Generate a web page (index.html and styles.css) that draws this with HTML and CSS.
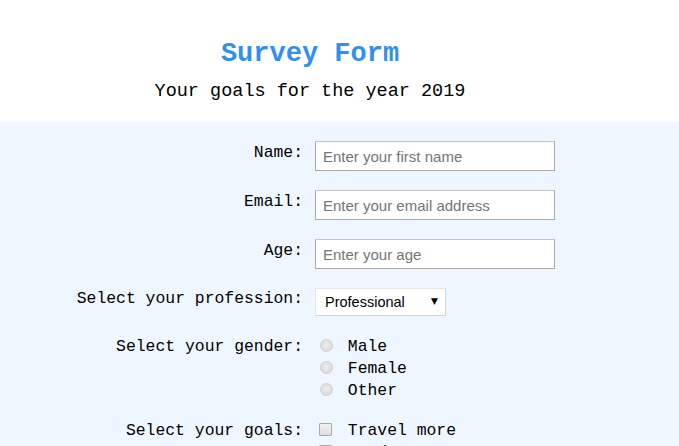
FILE: index.html
```html
<!DOCTYPE html>
<html lang="en">
<head>
<meta charset="utf-8">
<title>Survey Form</title>
<link rel="stylesheet" href="styles.css">
</head>
<body>
<header class="header">
  <h1 class="title">Survey Form</h1>
  <p class="subtitle">Your goals for the year 2019</p>
</header>
<main class="panel">
  <form class="form">
    <div class="row">
      <label class="label label-input" for="name">Name:</label>
      <input class="field" id="name" type="text" placeholder="Enter your first name">
    </div>
    <div class="row">
      <label class="label label-input" for="email">Email:</label>
      <input class="field" id="email" type="email" placeholder="Enter your email address">
    </div>
    <div class="row">
      <label class="label label-input" for="age">Age:</label>
      <input class="field" id="age" type="number" placeholder="Enter your age">
    </div>
    <div class="row row-select">
      <label class="label label-select" for="prof">Select your profession:</label>
      <span class="select-wrap">
        <select class="select" id="prof">
          <option>Professional</option>
          <option>Student</option>
          <option>Other</option>
        </select>
      </span>
    </div>
    <div class="row row-radio">
      <span class="label">Select your gender:</span>
      <div class="options">
        <label class="option"><input class="radio" type="radio" name="gender"> Male</label>
        <label class="option"><input class="radio" type="radio" name="gender"> Female</label>
        <label class="option"><input class="radio" type="radio" name="gender"> Other</label>
      </div>
    </div>
    <div class="row row-check">
      <span class="label">Select your goals:</span>
      <div class="options">
        <label class="option"><input class="check" type="checkbox"> Travel more</label>
        <label class="option"><input class="check" type="checkbox"> Read more</label>
        <label class="option"><input class="check" type="checkbox"> Exercise</label>
      </div>
    </div>
  </form>
</main>
</body>
</html>
```
FILE: styles.css
```css
html, body {
  margin: 0;
  padding: 0;
}
body {
  font-family: "Liberation Mono", "DejaVu Sans Mono", monospace;
  color: #000;
  background: #eef7ff;
}
.header {
  background: #fff;
  text-align: center;
  padding: 38px 59px 18px 0;
}
.title {
  margin: 0;
  font-size: 27px;
  line-height: 32px;
  font-weight: bold;
  color: #3090f0;
}
.subtitle {
  margin: 10px 0 0;
  font-size: 18.5px;
  line-height: 24px;
}
.panel {
  padding-top: 19px;
}
.form {
  display: flex;
  flex-direction: column;
}
.row {
  display: flex;
  align-items: flex-start;
  margin-bottom: 19px;
}
.label {
  width: 303px;
  flex: none;
  margin-right: 12px;
  text-align: right;
  font-size: 16.4px;
  line-height: 22px;
  white-space: nowrap;
}
.label-input {
  padding-top: 1px;
}
.label-select {
  padding-top: 0;
}
.field {
  box-sizing: border-box;
  width: 240px;
  height: 30px;
  margin: 0;
  padding: 0 7px;
  border: 1px solid #a9a9a9;
  border-top-color: #c4c4c4;
  background: #fff;
  font-family: "Liberation Sans", Arial, sans-serif;
  font-size: 15px;
  color: #333;
  outline: none;
}
.field::placeholder {
  color: #757575;
}
.field::-webkit-outer-spin-button,
.field::-webkit-inner-spin-button {
  -webkit-appearance: none;
  margin: 0;
}
.row-select {
  margin-bottom: 20px;
}
.select-wrap {
  position: relative;
  display: inline-block;
}
.select-wrap::after {
  content: "\25BC";
  position: absolute;
  right: 8px;
  top: 8px;
  font-family: "DejaVu Sans", sans-serif;
  font-size: 9px;
  color: #000;
  pointer-events: none;
}
.select {
  -webkit-appearance: none;
  appearance: none;
  box-sizing: border-box;
  width: 131px;
  height: 28px;
  margin: 0;
  padding: 0 9px;
  border: 1px solid #e6e6e6;
  border-bottom-color: #d4d4d4;
  border-right-color: #d4d4d4;
  border-radius: 0;
  background: #fff;
  font-family: "Liberation Sans", Arial, sans-serif;
  font-size: 14.5px;
  color: #000;
}
.row-radio {
  margin-bottom: 18px;
}
.options {
  display: flex;
  flex-direction: column;
}
.option {
  display: flex;
  align-items: center;
  font-size: 16.4px;
  line-height: 22px;
  white-space: pre;
}
.radio {
  -webkit-appearance: none;
  appearance: none;
  box-sizing: border-box;
  width: 13px;
  height: 13px;
  margin: 0 5px 0 5px;
  border: 1px solid #cfcfcf;
  border-radius: 50%;
  background: radial-gradient(circle at 50% 45%, #eeeeee 0, #dadada 75%);
  position: relative;
  top: -2px;
}
.check {
  -webkit-appearance: none;
  appearance: none;
  box-sizing: border-box;
  width: 13px;
  height: 13px;
  margin: 0 6px 0 4px;
  border: 1px solid #a8a8a8;
  border-radius: 1px;
  background: linear-gradient(#f1f1f1, #dedede);
  position: relative;
  top: -2px;
}
```
